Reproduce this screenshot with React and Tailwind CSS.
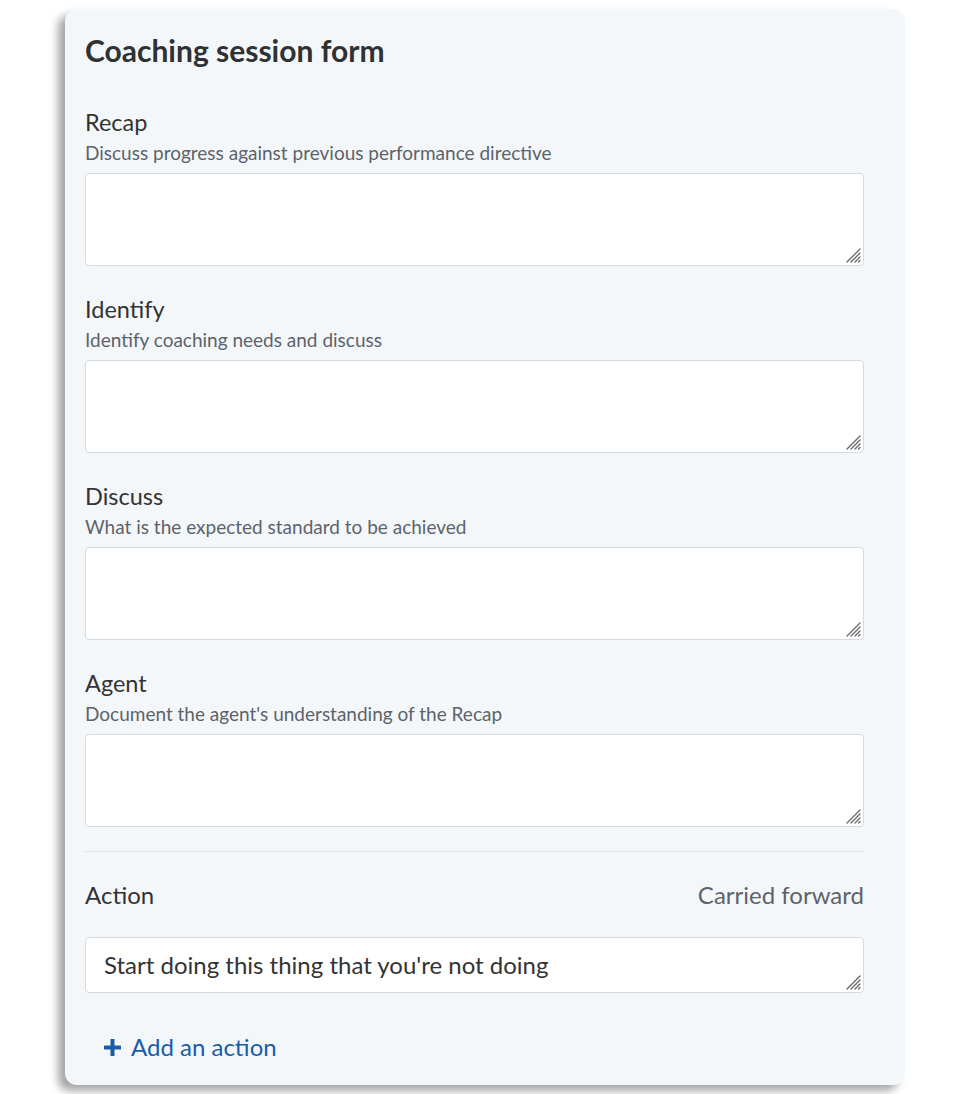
const sections = [
  { label: 'Recap', hint: 'Discuss progress against previous performance directive' },
  { label: 'Identify', hint: 'Identify coaching needs and discuss' },
  { label: 'Discuss', hint: 'What is the expected standard to be achieved' },
  { label: 'Agent', hint: "Document the agent's understanding of the Recap" },
];

function Grip() {
  return (
    <svg
      className="pointer-events-none absolute bottom-[3px] right-[3px] h-[16px] w-[16px]"
      viewBox="0 0 16 16"
      stroke="#6b6e72"
      strokeWidth="1.4"
      strokeLinecap="round"
    >
      <path d="M15 2 L2 15" />
      <path d="M15 6 L6 15" />
      <path d="M15 10 L10 15" />
      <path d="M15 13.5 L13.5 15" />
    </svg>
  );
}

function Field({ className, ...props }) {
  return (
    <div className="relative">
      <textarea
        className={`block w-full resize-none rounded-[4px] border border-[#d6dadf] bg-white outline-none ${className}`}
        {...props}
      />
      <Grip />
    </div>
  );
}

function Section({ label, hint }) {
  return (
    <div className="mb-[29px]">
      <div className="text-[23.5px] leading-[28px] text-[#333]">{label}</div>
      <div className="mt-[6px] text-[19px] leading-[22px] text-[#5d636a]">{hint}</div>
      <div className="mt-[9px]">
        <Field className="h-[93px]" />
      </div>
    </div>
  );
}

export default function App() {
  return (
    <div className="min-h-[1094px] bg-white pl-[65px] pt-[9px] font-['Lato','Open_Sans',sans-serif]">
      <div className="h-[1076px] w-[840px] rounded-[12px] bg-[#f4f7fa] pl-[20px] pr-[41px] pt-[24px] shadow-[-7px_6px_9px_rgba(0,0,0,0.35)]">
        <h1 className="mb-[41px] text-[30px] font-bold leading-[34px] text-[#2f3133]">Coaching session form</h1>
        {sections.map((s) => (
          <Section key={s.label} {...s} />
        ))}
        <div className="-mt-[5px] border-t border-[#dde1e5]" />
        <div className="mt-[29px] flex items-center justify-between text-[24px] leading-[28px]">
          <span className="text-[#333]">Action</span>
          <span className="text-[#5d636a]">Carried forward</span>
        </div>
        <div className="mt-[28px]">
          <Field
            className="h-[56px] pl-[18px] pt-[13px] text-[24px] leading-[28px] text-[#333]"
            defaultValue="Start doing this thing that you're not doing"
          />
        </div>
        <button className="mt-[40px] ml-[19px] flex items-center gap-[10px] text-[24px] leading-[28px] text-[#1a5da6]">
          <svg className="h-[17px] w-[17px]" viewBox="0 0 17 17" fill="#1a5da6">
            <rect x="6.5" y="0" width="4" height="17" rx="0.5" />
            <rect x="0" y="6.5" width="17" height="4" rx="0.5" />
          </svg>
          <span>Add an action</span>
        </button>
      </div>
    </div>
  );
}
